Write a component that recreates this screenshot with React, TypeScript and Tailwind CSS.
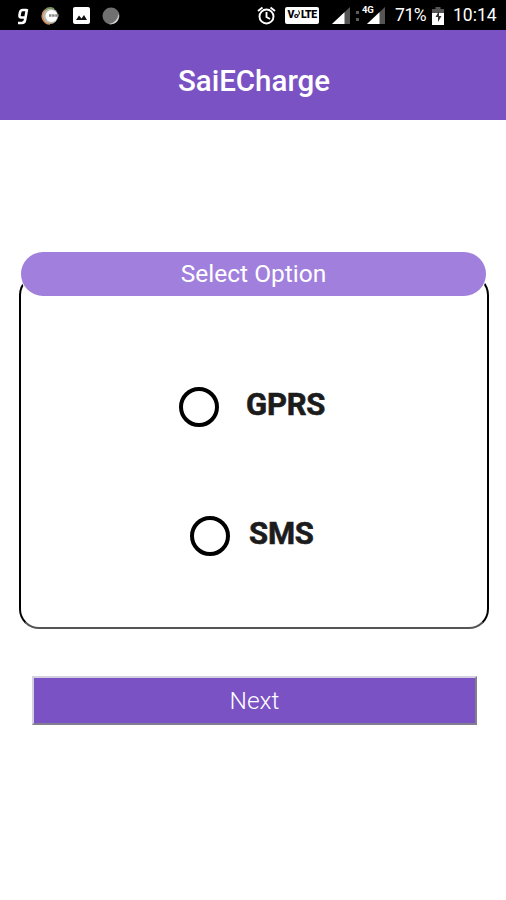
import { ReactNode } from "react";

function StatusBar() {
    return (
        <div className="flex h-[30px] items-center bg-black pl-[17px] pr-[9px] pt-px text-white">
            <svg className="h-5 w-3" viewBox="0 0 12 20" fill="none" stroke="currentColor" strokeWidth="2.6">
                <path d="M10 3 8.2 13.5Q7.7 17 4.8 17H1M9.8 4H5.7Q3.5 4 3 6.5L2.5 9.3Q2.2 11.5 4.2 11.5H8.6" />
            </svg>

            <svg className="ml-3 h-5 w-5" viewBox="0 0 20 20" fill="none">
                <circle cx="9" cy="10" r="8" fill="#b9b9b2" />
                <path d="M9 18A8 8 0 0 1 4 4" stroke="#cf8952" strokeWidth="1.6" />
                <path d="M4 4A8 8 0 0 1 13 3" stroke="#78905a" strokeWidth="1.6" />
                <circle cx="10.5" cy="10" r="6" fill="#fff" />
                <path d="M8 9.5h10" stroke="#888" strokeWidth="2.4" strokeDasharray="2.5 .6" />
            </svg>

            <svg className="ml-3 h-[17px] w-[17px]" viewBox="0 0 17 17">
                <rect width="17" height="17" rx="2" fill="#fff" />
                <path d="M3 13 6 8.5 8.5 11.5 11 8 14 13Z" fill="#111" />
            </svg>

            <svg className="ml-3 h-[18px] w-[18px]" viewBox="0 0 18 18">
                <circle cx="9" cy="9" r="8.5" fill="#707070" />
                <path d="M16.5 7A8 8 0 0 1 7 17 11 11 0 0 0 16.5 7Z" fill="#ddd" />
            </svg>

            <svg className="ml-auto h-5 w-[19px]" viewBox="0 0 19 20" fill="none" stroke="currentColor" strokeWidth="1.9">
                <circle cx="9.5" cy="10.5" r="7" />
                <path d="M1 5 5.5 1.5M18 5 13.5 1.5M9.5 6v5l3.5 2" />
            </svg>

            <div className="ml-[9px] flex h-[17px] w-[34px] items-center justify-center rounded-[2px] bg-white text-[10.5px] font-black leading-none tracking-[-0.5px] text-black">
                V<span className="text-[8px]">o</span>
                <svg className="-mt-1.5 h-1.5 w-[3px]" viewBox="0 0 3 6" fill="none" stroke="currentColor">
                    <path d="M.5.5Q2.5 3 .5 5.5" />
                </svg>
                LTE
            </div>

            <Signal className="ml-[13px] h-[17px] w-[18px]" />

            <svg className="ml-[6px] h-2.5 w-[3px]" viewBox="0 0 3 10" fill="#5c5c5c">
                <path d="M0 0h3v3H0zM0 7h3v3H0z" />
            </svg>

            <div className="relative ml-[8px] h-[17px] w-[18px]">
                <Signal className="h-[17px] w-[18px]" />
                <span className="absolute -left-[5px] -top-[2px] bg-black pr-px text-[9.5px] font-bold leading-[10px] tracking-[-0.3px]">
                    4G
                </span>
            </div>

            <span className="ml-[10px] mt-px w-[33px] whitespace-nowrap text-[17.5px] leading-none tracking-[-0.4px]">
                71%
            </span>

            <svg className="ml-[4px] h-[18px] w-[12px]" viewBox="0 0 12 18">
                <path d="M3.5 0h5v2H12v5H0V2h3.5z" fill="#555" />
                <path d="M0 6h12v12H0z" fill="#fff" />
                <path d="M7 4 3.5 10H6v5l3.5-6H7z" fill="#333" />
            </svg>

            <span className="ml-[9px] mt-px w-[44px] whitespace-nowrap text-[17.5px] leading-none">10:14</span>
        </div>
    );
}

const Signal = ({ className }: { className: string }) => {
    return (
        <svg className={className} viewBox="0 0 18 17">
            <path d="M18 0v17H0z" fill="#555" />
            <path d="M12.5 5.2V17H0z" fill="#fff" />
        </svg>
    );
};

const Option = ({
    className,
    children,
}: {
    className: string;
    children: ReactNode;
}) => {
    return (
        <label className={className}>
            <input
                type="radio"
                name="option"
                className="h-10 w-10 shrink-0 appearance-none rounded-full border-4 border-black bg-white checked:bg-[#7a52c4]"
            />
            <span className="-mt-[6px] [-webkit-text-stroke:0.6px_#1c1c1c]">{children}</span>
        </label>
    );
};

function App() {
    return (
        <div className="h-[900px] w-[506px] overflow-hidden bg-white font-['Roboto',sans-serif]">
            <StatusBar />

            <header className="flex h-[90px] items-center justify-center bg-[#7a52c4] pt-[13px] pl-0.5">
                <h1 className="text-[29.5px] font-medium leading-none text-white">SaiECharge</h1>
            </header>

            <main className="pt-[132px]">
                <h2 className="relative z-10 ml-[21px] flex h-11 w-[465px] items-center justify-center rounded-full bg-[#a17fdd] text-[24.5px] text-white shadow-[0_0_0_1px_white]">
                    Select Option
                </h2>

                <section className="-mt-[21px] ml-[19px] h-[354px] w-[470px] rounded-[20px] border-2 border-black border-b-[#555] border-t-transparent pt-[110px]">
                    <Option className="ml-[158px] flex h-10 items-center gap-[27px] text-[31px] font-bold leading-none tracking-[-0.2px] text-[#1c1c1c]">
                        GPRS
                    </Option>
                    <Option className="ml-[169px] mt-[89px] flex h-10 items-center gap-[19px] text-[31px] font-bold leading-none tracking-[-0.2px] text-[#1c1c1c]">
                        SMS
                    </Option>
                </section>

                <button className="ml-8 mt-[47px] block h-[49px] w-[445px] border-2 border-b-[#827d90] border-l-[#d5cfe2] border-r-[#827d90] border-t-[#d5cfe2] bg-[#7a52c4] pt-0.5 text-[24.5px] font-light leading-none text-white">
                    Next
                </button>
            </main>
        </div>
    );
}

export default App;
